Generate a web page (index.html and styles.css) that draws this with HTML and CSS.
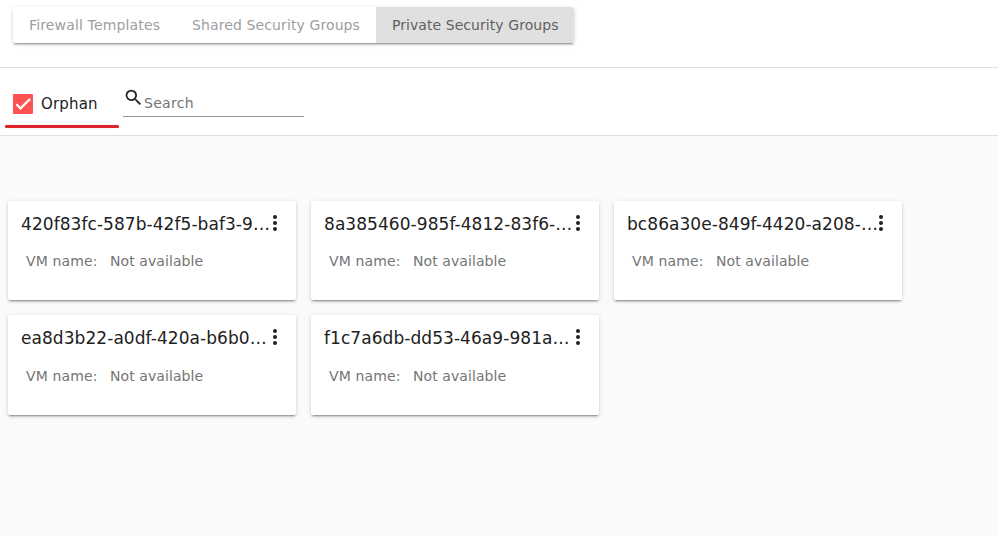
FILE: index.html
```html
<!DOCTYPE html>
<html lang="en">
<head>
<meta charset="utf-8">
<title>Security Groups</title>
<link rel="stylesheet" href="styles.css">
</head>
<body>
<header class="tabs-bar">
  <nav class="tabs">
    <a class="tab tab-templates">Firewall Templates</a>
    <a class="tab tab-shared">Shared Security Groups</a>
    <a class="tab tab-private active">Private Security Groups</a>
  </nav>
</header>
<section class="filters">
  <label class="orphan">
    <svg class="checkbox" viewBox="0 0 20 20"><rect width="20" height="20" rx="1"/><path d="M3.4 10.2l4.2 4.2L17 5"/></svg>
    <span>Orphan</span>
  </label>
  <div class="search">
    <svg class="search-icon" viewBox="0 0 24 24"><path d="M9.5 3A6.5 6.5 0 0 1 16 9.5c0 1.61-.59 3.09-1.56 4.23l.27.27h.79l5 5-1.5 1.5-5-5v-.79l-.27-.27A6.52 6.52 0 0 1 9.5 16a6.5 6.5 0 0 1 0-13m0 2C7 5 5 7 5 9.5S7 14 9.5 14 14 12 14 9.5 12 5 9.5 5z"/></svg>
    <span class="placeholder">Search</span>
  </div>
</section>
<main class="cards">
  <article class="card">
    <div class="card-head"><h2>420f83fc-587b-42f5-baf3-9…</h2><svg class="dots" viewBox="0 0 6 18"><circle cx="3" cy="3" r="2"/><circle cx="3" cy="9" r="2"/><circle cx="3" cy="15" r="2"/></svg></div>
    <p class="vm"><span>VM name:</span><span>Not available</span></p>
  </article>
  <article class="card">
    <div class="card-head"><h2>8a385460-985f-4812-83f6-…</h2><svg class="dots" viewBox="0 0 6 18"><circle cx="3" cy="3" r="2"/><circle cx="3" cy="9" r="2"/><circle cx="3" cy="15" r="2"/></svg></div>
    <p class="vm"><span>VM name:</span><span>Not available</span></p>
  </article>
  <article class="card">
    <div class="card-head"><h2>bc86a30e-849f-4420-a208-…</h2><svg class="dots" viewBox="0 0 6 18"><circle cx="3" cy="3" r="2"/><circle cx="3" cy="9" r="2"/><circle cx="3" cy="15" r="2"/></svg></div>
    <p class="vm"><span>VM name:</span><span>Not available</span></p>
  </article>
  <article class="card second-row">
    <div class="card-head"><h2>ea8d3b22-a0df-420a-b6b0…</h2><svg class="dots" viewBox="0 0 6 18"><circle cx="3" cy="3" r="2"/><circle cx="3" cy="9" r="2"/><circle cx="3" cy="15" r="2"/></svg></div>
    <p class="vm"><span>VM name:</span><span>Not available</span></p>
  </article>
  <article class="card second-row">
    <div class="card-head"><h2>f1c7a6db-dd53-46a9-981a…</h2><svg class="dots" viewBox="0 0 6 18"><circle cx="3" cy="3" r="2"/><circle cx="3" cy="9" r="2"/><circle cx="3" cy="15" r="2"/></svg></div>
    <p class="vm"><span>VM name:</span><span>Not available</span></p>
  </article>
</main>
</body>
</html>
```
FILE: styles.css
```css
* { box-sizing: border-box; }
body {
  margin: 0;
  height: 536px;
  overflow: hidden;
  background: #fafafa;
  color: #212121;
  font-family: "DejaVu Sans", sans-serif;
  font-size: 14px;
}
.tabs-bar {
  height: 68px;
  padding: 7px 13px 0;
  background: #fff;
  border-bottom: 1px solid #e0e0e0;
}
.tabs {
  display: inline-flex;
  height: 36px;
  border-radius: 2px;
  box-shadow: 0 3px 1px -2px rgba(0,0,0,.2), 0 2px 2px 0 rgba(0,0,0,.14), 0 1px 5px 0 rgba(0,0,0,.12);
}
.tab {
  padding-left: 16px;
  line-height: 36px;
  color: #9e9e9e;
  white-space: nowrap;
}
.tab-templates { width: 163px; letter-spacing: .15px; }
.tab-shared { width: 200px; letter-spacing: .11px; }
.tab-private { width: 198px; letter-spacing: .06px; }
.tab.active { background: #e0e0e0; color: #616161; border-radius: 0 2px 2px 0; }
.filters {
  display: flex;
  height: 68px;
  padding-left: 5px;
  background: #fff;
  border-bottom: 1px solid #e0e0e0;
}
.orphan {
  display: flex;
  flex-wrap: wrap;
  align-items: center;
  align-content: flex-start;
  column-gap: 8px;
  width: 114px;
  padding: 26px 0 0 8px;
  font-size: 15px;
  line-height: 20px;
  letter-spacing: .16px;
}
.orphan::after {
  content: "";
  flex: none;
  width: 114px;
  height: 3px;
  margin: 11px 0 0 -8px;
  border-radius: 1.5px;
  background: #dd2229;
  box-shadow: 0 0 1px rgba(221,34,41,.6);
}
.checkbox { width: 20px; height: 20px; }
.checkbox rect { fill: #ff5252; }
.checkbox path { fill: none; stroke: #fff; stroke-width: 2.2; }
.search {
  display: flex;
  width: 181px;
  height: 49px;
  margin-left: 4px;
  border-bottom: 1px solid #949494;
}
.search-icon { width: 21px; height: 21px; margin-top: 19px; fill: #212121; }
.placeholder { margin-top: 27px; color: #757575; line-height: 16px; letter-spacing: .3px; }
.cards {
  display: grid;
  grid-template-columns: repeat(3, 288px);
  grid-template-rows: 99px 100px;
  gap: 15px;
  padding: 65px 8px 0;
}
.card {
  padding: 11px 13px;
  background: #fff;
  border-radius: 2px;
  box-shadow: 0 3px 1px -2px rgba(0,0,0,.2), 0 2px 2px 0 rgba(0,0,0,.14), 0 1px 5px 0 rgba(0,0,0,.12);
}
.card-head { display: flex; height: 24px; }
h2 {
  flex: none;
  width: 251px;
  margin: 0;
  font-size: 17px;
  font-weight: 400;
  line-height: 24px;
  letter-spacing: .06px;
  white-space: nowrap;
}
.dots { width: 6px; height: 18px; margin-top: 2px; fill: #212121; }
.vm {
  display: flex;
  gap: 12px;
  margin: 17px 0 0 5px;
  color: #757575;
  line-height: 16px;
  letter-spacing: .08px;
}
.vm span:first-child { width: 72px; }
.vm span:first-child { letter-spacing: .14px; }
.second-row .vm { margin-top: 18px; }
```
